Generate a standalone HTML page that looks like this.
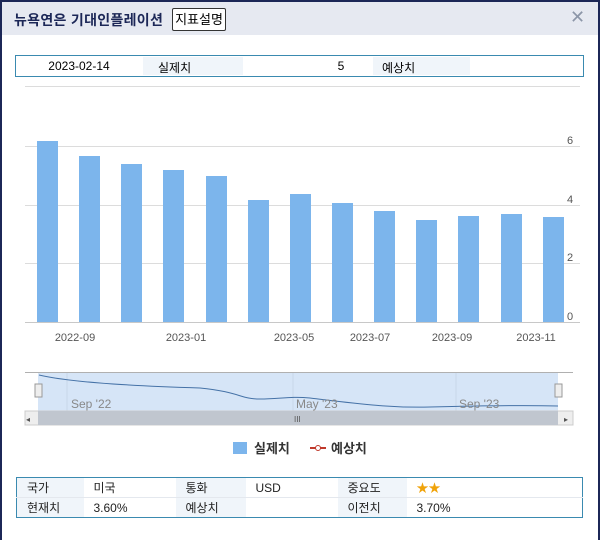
<!DOCTYPE html><html><head><meta charset="utf-8"><style>
*{margin:0;padding:0;box-sizing:border-box}
body{width:600px;height:540px;overflow:hidden;background:#fff;font-family:"Liberation Sans","Noto Sans CJK KR",sans-serif;position:relative}
.frame{position:absolute;left:0;top:0;width:600px;height:540px;border:2px solid #1c2757;border-bottom:none}
.hdr{position:absolute;left:2px;top:2px;width:596px;height:33px;background:#e6e9f1}
.title{position:absolute;left:12px;top:8px;font-size:14px;color:#1c2757;font-weight:bold;letter-spacing:0.3px;white-space:nowrap}
.btn{position:absolute;left:170px;top:6px;width:54px;height:23px;border:1px solid #333;border-radius:2px;background:#fff;font-size:13px;text-align:center;line-height:21px}
.x{position:absolute;left:568px;top:5px;font-size:18px;color:#8c96a8}
table{border-collapse:collapse;position:absolute;font-size:12px;table-layout:fixed}
td{height:20px;padding-left:10px;color:#222}
.g{background:#f0f5fa}
</style></head><body>
<div class="frame"></div>
<div class="hdr"><div class="title">뉴욕연은 기대인플레이션</div><div class="btn">지표설명</div><div class="x">✕</div></div>
<div style="position:absolute;left:15px;top:55px;width:569px;height:22px;border:1px solid #3a8ab0;font-size:12px">
<div style="position:absolute;left:0;top:3px;width:126px;text-align:center">2023-02-14</div>
<div class="g" style="position:absolute;left:127px;top:1px;width:100px;height:18px;padding:2px 0 0 15px">실제치</div>
<div style="position:absolute;left:300px;top:3px;width:50px;text-align:center">5</div>
<div class="g" style="position:absolute;left:357px;top:1px;width:97px;height:18px;padding:2px 0 0 9px">예상치</div>
</div>
<svg style="position:absolute;left:0;top:0" width="600" height="540" font-family="Liberation Sans, sans-serif">
<g stroke="#dcdcdc"><line x1="25" y1="86.5" x2="580" y2="86.5"/><line x1="25" y1="146.5" x2="580" y2="146.5"/><line x1="25" y1="205.5" x2="580" y2="205.5"/><line x1="25" y1="263.5" x2="580" y2="263.5"/></g>
<line x1="25" y1="322.5" x2="580" y2="322.5" stroke="#c8c8c8"/>
<g fill="#7cb5ec">
<rect x="37" y="141" width="21" height="181"/><rect x="79" y="156" width="21" height="166"/><rect x="121" y="164" width="21" height="158"/><rect x="163" y="170" width="21" height="152"/><rect x="206" y="176" width="21" height="146"/><rect x="248" y="200" width="21" height="122"/><rect x="290" y="194" width="21" height="128"/><rect x="332" y="203" width="21" height="119"/><rect x="374" y="211" width="21" height="111"/><rect x="416" y="220" width="21" height="102"/><rect x="458" y="216" width="21" height="106"/><rect x="501" y="214" width="21" height="108"/><rect x="543" y="217" width="21" height="105"/></g>
<g font-size="11" fill="#555"><text x="567" y="144">6</text><text x="567" y="203">4</text><text x="567" y="261">2</text><text x="567" y="320">0</text>
<g text-anchor="middle"><text x="75" y="341">2022-09</text><text x="186" y="341">2023-01</text><text x="294" y="341">2023-05</text><text x="370" y="341">2023-07</text><text x="452" y="341">2023-09</text><text x="536" y="341">2023-11</text></g></g>
<line x1="25" y1="372.5" x2="573" y2="372.5" stroke="#b0b0b0"/>
<rect x="38" y="373" width="520" height="38" fill="#d6e5f7"/>
<g stroke="#c8d6e8"><line x1="67" y1="373" x2="67" y2="411"/><line x1="293" y1="373" x2="293" y2="411"/><line x1="456" y1="373" x2="456" y2="411"/></g>
<path d="M39 375 C60 380,100 385,200 388 C240 392,240 399,260 399 C280 399,290 396,310 398 C360 404,390 408,430 407 C470 406,520 405,558 406" fill="none" stroke="#4572a7" stroke-width="1"/>
<g font-size="12" fill="#888"><text x="71" y="408">Sep '22</text><text x="296" y="408">May '23</text><text x="459" y="408">Sep '23</text></g>
<rect x="35" y="384" width="7" height="13" fill="#eee" stroke="#999"/><rect x="555" y="384" width="7" height="13" fill="#eee" stroke="#999"/>
<rect x="25" y="411" width="548" height="14" fill="#eee" stroke="#ccc"/>
<rect x="38" y="411" width="520" height="14" fill="#c0c6cf"/>
<text x="26" y="422" font-size="8" fill="#555">◂</text><text x="564" y="422" font-size="8" fill="#555">▸</text>
<text x="294" y="422" font-size="8" fill="#555">III</text>
<rect x="233" y="442" width="14" height="12" fill="#7cb5ec"/>
<text x="254" y="453" font-size="13" font-weight="bold" fill="#333" font-family="Liberation Sans, Noto Sans CJK KR, sans-serif">실제치</text>
<line x1="310" y1="448" x2="326" y2="448" stroke="#c0392b" stroke-width="2"/><circle cx="318" cy="448" r="2.5" fill="#fff" stroke="#c0392b"/>
<text x="331" y="453" font-size="13" font-weight="bold" fill="#333" font-family="Liberation Sans, Noto Sans CJK KR, sans-serif">예상치</text>
</svg>
<table style="left:16px;top:477px;width:567px;border:1px solid #3a8ab0">
<colgroup><col style="width:67px"><col style="width:92px"><col style="width:70px"><col style="width:92px"><col style="width:69px"><col></colgroup>
<tr style="border-bottom:1px solid #e4e8ee"><td class="g">국가</td><td>미국</td><td class="g">통화</td><td>USD</td><td class="g">중요도</td><td style="color:#f0a30a;font-size:12px">★★</td></tr>
<tr><td class="g">현재치</td><td>3.60%</td><td class="g">예상치</td><td></td><td class="g">이전치</td><td>3.70%</td></tr>
</table>
</body></html>
